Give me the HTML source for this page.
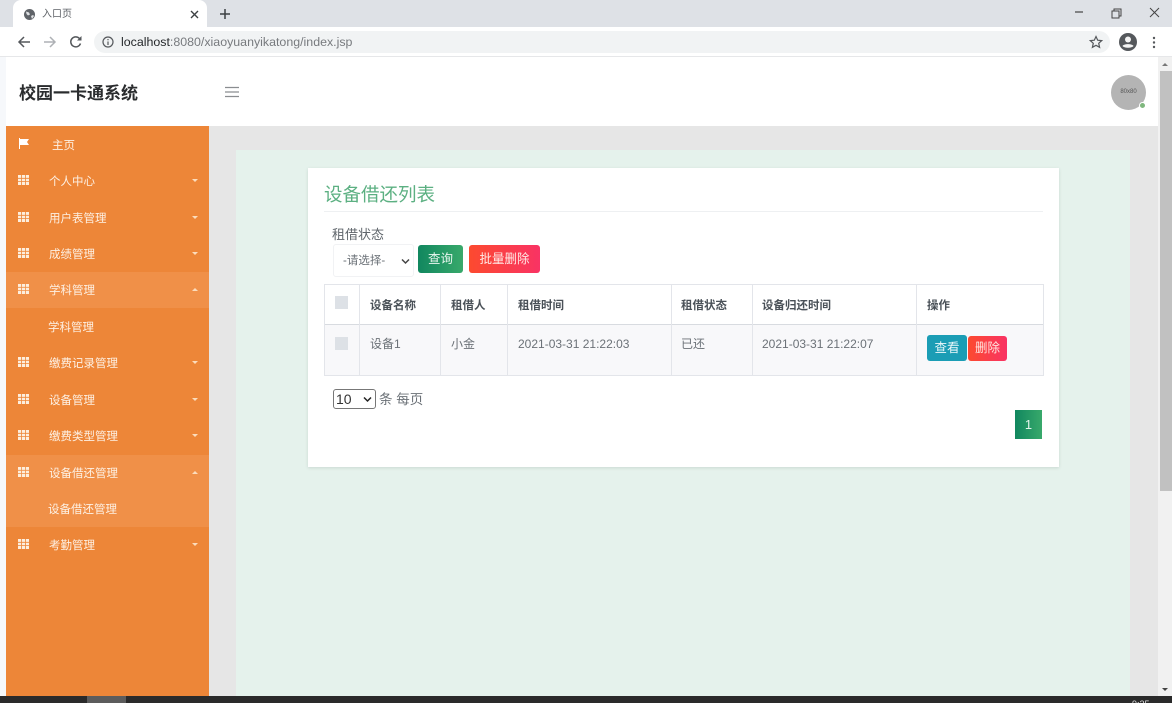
<!DOCTYPE html>
<html lang="zh"><head><meta charset="utf-8"><title>入口页</title>
<style>
*{box-sizing:border-box}
html,body{margin:0;padding:0;width:1172px;height:703px;overflow:hidden;background:#fff;font-family:"Liberation Sans","Noto Sans CJK SC",sans-serif}
body{filter:blur(.35px)}
.a{position:absolute;white-space:nowrap}
.m{position:absolute;left:6px;width:203px;height:36.4px}
.m .t{position:absolute;left:43px;top:11px;font-size:11.500px;line-height:16px;color:#fdf0e3}
.m svg.g{position:absolute;left:12px;top:12px}
.m .c{position:absolute;left:186px;top:16px;width:0;height:0;border-left:3px solid transparent;border-right:3px solid transparent;border-top:3px solid #fbdcbc}
.m .u{border-top:0;border-bottom:3px solid #fbdcbc}
.th{position:absolute;top:298px;font-size:11.500px;line-height:16px;font-weight:bold;color:#4a5158}
.td{position:absolute;top:336px;font-size:12px;line-height:16px;color:#6b7177}
.v{position:absolute;width:1px;background:#e3e5ea;top:284px;height:92px}
.h{position:absolute;left:324px;width:719px;height:1px;background:#e3e5ea}
.cb{position:absolute;left:335px;width:13px;height:13px;background:#dde1e6}
</style></head><body>
<!-- browser chrome -->
<div class="a" style="left:0;top:0;width:1172px;height:27px;background:#dee1e6"></div>
<div class="a" style="left:13px;top:0;width:194px;height:27px;background:#fff;border-radius:8px 8px 0 0"></div>
<svg class="a" style="left:23px;top:8px" width="13" height="13" viewBox="0 0 13 13"><circle cx="6.5" cy="6.5" r="5.5" fill="#5f6368"/><path d="M3 3.5l3 1 1 2-2 1-1.500-1.500zM8 8l2-1 1 1-2 3z" fill="#dfe1e4"/></svg>
<div class="a" style="left:42px;top:8px;font-size:10px;line-height:14px;color:#5f6368">入口页</div>
<svg class="a" style="left:190px;top:10px" width="9" height="9" viewBox="0 0 9 9"><path d="M1 1l7 7M8 1l-7 7" stroke="#3c4043" stroke-width="1.400"/></svg>
<svg class="a" style="left:219px;top:8px" width="12" height="12" viewBox="0 0 12 12"><path d="M6 1v10M1 6h10" stroke="#3c4043" stroke-width="1.500"/></svg>
<svg class="a" style="left:1073px;top:6px" width="92" height="16" viewBox="0 0 92 16"><path d="M2 6h8" stroke="#444" stroke-width="1.200"/><path d="M39 5h7v7h-7zM41 5V3h7v7h-2" fill="none" stroke="#444" stroke-width="1"/><path d="M77 2l9 9M86 2l-9 9" stroke="#444" stroke-width="1"/></svg>
<div class="a" style="left:0;top:27px;width:1172px;height:30px;background:#fff;border-bottom:1px solid #e6e7e9"></div>
<svg class="a" style="left:17px;top:35px" width="14" height="14" viewBox="0 0 14 14"><path d="M13 7H2M7 2L2 7l5 5" fill="none" stroke="#55585c" stroke-width="1.500"/></svg>
<svg class="a" style="left:43px;top:35px" width="14" height="14" viewBox="0 0 14 14"><path d="M1 7h11M7 2l5 5-5 5" fill="none" stroke="#aeb1b5" stroke-width="1.500"/></svg>
<svg class="a" style="left:69px;top:35px" width="14" height="14" viewBox="0 0 14 14"><path d="M11.500 8.500A5 5 0 1 1 10.500 3.500" fill="none" stroke="#55585c" stroke-width="1.500"/><path d="M12.500 1v4.500H8z" fill="#55585c"/></svg>
<div class="a" style="left:94px;top:31px;width:1016px;height:22px;border-radius:11px;background:#f1f3f4"></div>
<svg class="a" style="left:102px;top:36px" width="12" height="12" viewBox="0 0 12 12"><circle cx="6" cy="6" r="5" fill="none" stroke="#55585c" stroke-width="1.200"/><path d="M6 5.500V9M6 3v1.300" stroke="#55585c" stroke-width="1.200"/></svg>
<div class="a" style="left:121px;top:34px;font-size:12.400px;line-height:16px;color:#777a7e"><span style="color:#25282b">localhost</span>:8080/xiaoyuanyikatong/index.jsp</div>
<svg class="a" style="left:1089px;top:35px" width="14" height="14" viewBox="0 0 14 14"><path d="M7 1.500l1.700 3.700 4 .4-3 2.700.9 4L7 10.300l-3.600 2 .9-4-3-2.700 4-.4z" fill="none" stroke="#55585c" stroke-width="1.200"/></svg>
<svg class="a" style="left:1119px;top:33px" width="18" height="18" viewBox="0 0 18 18"><circle cx="9" cy="9" r="9" fill="#55585c"/><circle cx="9" cy="6.500" r="3" fill="#f4f4f4"/><path d="M3.500 13c1.500-2.500 9.500-2.500 11 0-1.500 2.300-9.500 2.300-11 0z" fill="#f4f4f4"/></svg>
<svg class="a" style="left:1152px;top:36px" width="4" height="13" viewBox="0 0 4 13"><circle cx="2" cy="2" r="1.200" fill="#55585c"/><circle cx="2" cy="6.500" r="1.200" fill="#55585c"/><circle cx="2" cy="11" r="1.200" fill="#55585c"/></svg>

<!-- page -->
<div class="a" style="left:0;top:57px;width:6px;height:639px;background:#f6f8fb"></div>
<div class="a" style="left:209px;top:126px;width:949px;height:570px;background:#e6e6e6"></div>
<div class="a" style="left:236px;top:150px;width:894px;height:546px;background:#e5f2ec"></div>

<!-- header -->
<div class="a" style="left:19px;top:82px;font-size:17px;line-height:24px;font-weight:bold;color:#2a2c2e">校园一卡通系统</div>
<svg class="a" style="left:224px;top:86px" width="16" height="12" viewBox="0 0 16 12"><path d="M1 1.500h14M1 6h14M1 10.500h14" stroke="#8a8d90" stroke-width="1.200"/></svg>
<div class="a" style="left:1111px;top:75px;width:35px;height:35px;border-radius:50%;background:#b4b4b4;text-align:center;font-size:6px;line-height:35px;color:#555">80x80</div>
<div class="a" style="left:1139px;top:102px;width:7px;height:7px;border-radius:50%;background:#7fb77e;border:1px solid #fff"></div>

<!-- scrollbar -->
<div class="a" style="left:1158px;top:57px;width:14px;height:639px;background:#f1f1f1"></div>
<div class="a" style="left:1160px;top:71px;width:12px;height:420px;background:#c1c1c1"></div>
<div class="a" style="left:1162px;top:63px;width:0;height:0;border-left:3px solid transparent;border-right:3px solid transparent;border-bottom:3px solid #777"></div>
<div class="a" style="left:1162px;top:688px;width:0;height:0;border-left:3px solid transparent;border-right:3px solid transparent;border-top:3px solid #444"></div>

<!-- sidebar -->
<div class="a" style="left:6px;top:126px;width:203px;height:570px;background:#ed8638"></div>
<div class="a" style="left:6px;top:272px;width:203px;height:36px;background:#f09048"></div>
<div class="a" style="left:6px;top:455px;width:203px;height:72px;background:#f09048"></div>

<div class="m" style="top:127px"><svg class="g" width="12" height="11" viewBox="0 0 12 11" style="top:11px"><path d="M1 0h1v11H1zM2 1h9l-2 3 2 3H2z" fill="#fff"/></svg><span class="t" style="left:46px">主页</span></div>
<div class="m" style="top:163px"><svg class="g" width="11" height="10" viewBox="0 0 11 10"><path d="M0 0h11v10H0z" fill="#fdeedd"/><path d="M3.500 0v10M7.500 0v10M0 3.300h11M0 6.600h11" stroke="#ed8638" stroke-width=".8"/></svg><span class="t">个人中心</span><i class="c"></i></div>
<div class="m" style="top:200px"><svg class="g" width="11" height="10" viewBox="0 0 11 10"><path d="M0 0h11v10H0z" fill="#fdeedd"/><path d="M3.500 0v10M7.500 0v10M0 3.300h11M0 6.600h11" stroke="#ed8638" stroke-width=".8"/></svg><span class="t">用户表管理</span><i class="c"></i></div>
<div class="m" style="top:236px"><svg class="g" width="11" height="10" viewBox="0 0 11 10"><path d="M0 0h11v10H0z" fill="#fdeedd"/><path d="M3.500 0v10M7.500 0v10M0 3.300h11M0 6.600h11" stroke="#ed8638" stroke-width=".8"/></svg><span class="t">成绩管理</span><i class="c"></i></div>
<div class="m" style="top:272px"><svg class="g" width="11" height="10" viewBox="0 0 11 10"><path d="M0 0h11v10H0z" fill="#fdeedd"/><path d="M3.500 0v10M7.500 0v10M0 3.300h11M0 6.600h11" stroke="#f09048" stroke-width=".8"/></svg><span class="t">学科管理</span><i class="c u"></i></div>
<div class="m" style="top:309px"><span class="t" style="left:42px">学科管理</span></div>
<div class="m" style="top:345px"><svg class="g" width="11" height="10" viewBox="0 0 11 10"><path d="M0 0h11v10H0z" fill="#fdeedd"/><path d="M3.500 0v10M7.500 0v10M0 3.300h11M0 6.600h11" stroke="#ed8638" stroke-width=".8"/></svg><span class="t">缴费记录管理</span><i class="c"></i></div>
<div class="m" style="top:382px"><svg class="g" width="11" height="10" viewBox="0 0 11 10"><path d="M0 0h11v10H0z" fill="#fdeedd"/><path d="M3.500 0v10M7.500 0v10M0 3.300h11M0 6.600h11" stroke="#ed8638" stroke-width=".8"/></svg><span class="t">设备管理</span><i class="c"></i></div>
<div class="m" style="top:418px"><svg class="g" width="11" height="10" viewBox="0 0 11 10"><path d="M0 0h11v10H0z" fill="#fdeedd"/><path d="M3.500 0v10M7.500 0v10M0 3.300h11M0 6.600h11" stroke="#ed8638" stroke-width=".8"/></svg><span class="t">缴费类型管理</span><i class="c"></i></div>
<div class="m" style="top:455px"><svg class="g" width="11" height="10" viewBox="0 0 11 10"><path d="M0 0h11v10H0z" fill="#fdeedd"/><path d="M3.500 0v10M7.500 0v10M0 3.300h11M0 6.600h11" stroke="#f09048" stroke-width=".8"/></svg><span class="t">设备借还管理</span><i class="c u"></i></div>
<div class="m" style="top:491px"><span class="t" style="left:42px">设备借还管理</span></div>
<div class="m" style="top:527px"><svg class="g" width="11" height="10" viewBox="0 0 11 10"><path d="M0 0h11v10H0z" fill="#fdeedd"/><path d="M3.500 0v10M7.500 0v10M0 3.300h11M0 6.600h11" stroke="#ed8638" stroke-width=".8"/></svg><span class="t">考勤管理</span><i class="c"></i></div>

<!-- card -->
<div class="a" style="left:308px;top:168px;width:751px;height:299px;background:#fff;box-shadow:0 1px 3px rgba(40,70,60,.15)"></div>
<div class="a" style="left:324px;top:183px;font-size:18.500px;line-height:24px;color:#5cb082">设备借还列表</div>
<div class="a" style="left:324px;top:211px;width:719px;height:1px;background:#eef0f2"></div>
<div class="a" style="left:332px;top:226px;font-size:13px;line-height:17px;color:#5f656b">租借状态</div>
<div class="a" style="left:333px;top:244px;width:81px;height:33px;background:#fff;border:1px solid #f1f2f4;border-radius:3px"></div>
<div class="a" style="left:343px;top:253px;font-size:11.500px;line-height:16px;color:#6b7177">-请选择-</div>
<svg class="a" style="left:401px;top:258px" width="9" height="7" viewBox="0 0 9 7"><path d="M1 1.500l3.500 3.500L8 1.500" fill="none" stroke="#444" stroke-width="1.500"/></svg>
<div class="a" style="left:418px;top:245px;width:45px;height:28px;border-radius:3px;background:linear-gradient(90deg,#11875f,#38a96b);color:#e9f6ef;font-size:12.500px;line-height:28px;text-align:center">查询</div>
<div class="a" style="left:469px;top:245px;width:71px;height:28px;border-radius:3px;background:linear-gradient(90deg,#fc4a2f,#f93364);color:#ffe9e5;font-size:12.500px;line-height:28px;text-align:center">批量删除</div>

<!-- table -->
<div class="a" style="left:324px;top:325px;width:719px;height:51px;background:#f8f8fa"></div>
<div class="h" style="top:284px"></div><div class="h" style="top:324px;background:#d8dbe0"></div><div class="h" style="top:375px"></div>
<div class="v" style="left:324px"></div><div class="v" style="left:359px"></div><div class="v" style="left:440px"></div><div class="v" style="left:507px"></div><div class="v" style="left:671px"></div><div class="v" style="left:752px"></div><div class="v" style="left:916px"></div><div class="v" style="left:1043px"></div>
<div class="cb" style="top:296px"></div><div class="cb" style="top:337px"></div>
<div class="th" style="left:370px">设备名称</div><div class="th" style="left:451px">租借人</div><div class="th" style="left:518px">租借时间</div><div class="th" style="left:681px">租借状态</div><div class="th" style="left:762px">设备归还时间</div><div class="th" style="left:927px">操作</div>
<div class="td" style="left:370px">设备1</div><div class="td" style="left:451px">小金</div><div class="td" style="left:518px">2021-03-31 21:22:03</div><div class="td" style="left:681px">已还</div><div class="td" style="left:762px">2021-03-31 21:22:07</div>
<div class="a" style="left:927px;top:335px;width:40px;height:26px;border-radius:3px;background:#1b9db5;color:#eaf7fa;font-size:12.500px;line-height:26px;text-align:center">查看</div>
<div class="a" style="left:968px;top:336px;width:39px;height:25px;border-radius:3px;background:linear-gradient(90deg,#fc4a2f,#f93364);color:#ffe4df;font-size:12.500px;line-height:25px;text-align:center">删除</div>

<!-- page size -->
<div class="a" style="left:333px;top:389px;width:43px;height:20px;border:1px solid #777;border-radius:3px;background:#fff"></div>
<div class="a" style="left:336px;top:390px;font-size:14px;line-height:18px;color:#333">10</div>
<svg class="a" style="left:363px;top:396px" width="9" height="7" viewBox="0 0 9 7"><path d="M1 1.500l3.500 3.500L8 1.500" fill="none" stroke="#222" stroke-width="1.500"/></svg>
<div class="a" style="left:379px;top:391px;font-size:13.500px;line-height:18px;color:#6b7177">条 每页</div>
<div class="a" style="left:1015px;top:410px;width:27px;height:29px;background:linear-gradient(90deg,#11875f,#38a96b);color:#e4f4ec;font-size:13px;line-height:29px;text-align:center">1</div>

<!-- taskbar -->
<div class="a" style="left:0;top:696px;width:1172px;height:7px;background:#2a2a2a"></div>
<div class="a" style="left:87px;top:696px;width:39px;height:7px;background:#5c5c5c"></div>
<div class="a" style="left:1132px;top:699px;font-size:9px;line-height:10px;color:#ddd">9:25</div>
</body></html>
